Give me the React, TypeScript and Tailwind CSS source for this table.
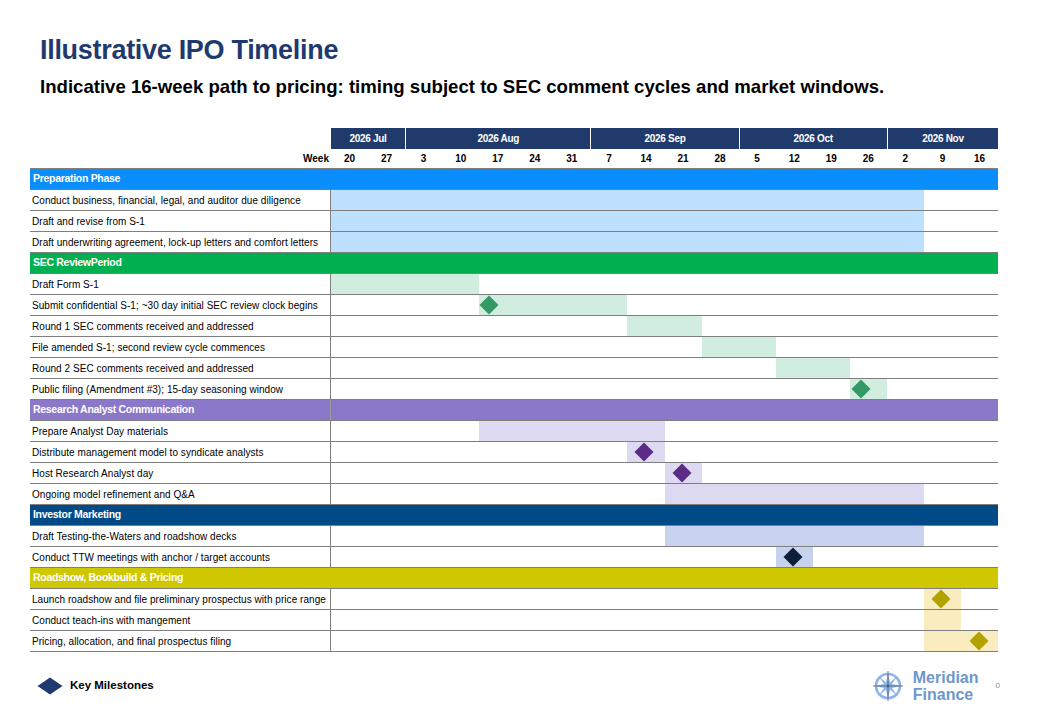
import React from "react";

const weeks = [20, 27, 3, 10, 17, 24, 31, 7, 14, 21, 28, 5, 12, 19, 26, 2, 9, 16];

const months = [
  { label: "2026 Jul", span: "col-span-2" },
  { label: "2026 Aug", span: "col-span-5" },
  { label: "2026 Sep", span: "col-span-4" },
  { label: "2026 Oct", span: "col-span-4" },
  { label: "2026 Nov", span: "col-span-3" },
];

type Task = { label: string; bar: string; diamond?: number };
type Section = {
  title: string;
  header: string;
  divider?: boolean;
  barColor: string;
  diamondColor: string;
  tasks: Task[];
};

const sections: Section[] = [
  {
    title: "Preparation Phase",
    header: "bg-[#0a8dfd]",
    barColor: "bg-[#bde0fe]",
    diamondColor: "#0a8dfd",
    tasks: [
      { label: "Conduct business, financial, legal, and auditor due diligence", bar: "col-start-1 col-span-16" },
      { label: "Draft and revise from S-1", bar: "col-start-1 col-span-16" },
      { label: "Draft underwriting agreement, lock-up letters and comfort letters", bar: "col-start-1 col-span-16" },
    ],
  },
  {
    title: "SEC ReviewPeriod",
    header: "bg-[#00b050]",
    barColor: "bg-[#d1eddf]",
    diamondColor: "#339966",
    tasks: [
      { label: "Draft Form S-1", bar: "col-start-1 col-span-4" },
      { label: "Submit confidential S-1; ~30 day initial SEC review clock begins", bar: "col-start-5 col-span-4", diamond: 159 },
      { label: "Round 1 SEC comments received and addressed", bar: "col-start-9 col-span-2" },
      { label: "File amended S-1; second review cycle commences", bar: "col-start-11 col-span-2" },
      { label: "Round 2 SEC comments received and addressed", bar: "col-start-13 col-span-2" },
      { label: "Public filing (Amendment #3); 15-day seasoning window", bar: "col-start-15 col-span-1", diamond: 531 },
    ],
  },
  {
    title: "Research Analyst Communication",
    header: "bg-[#8b78c8]",
    divider: true,
    barColor: "bg-[#ddd9f0]",
    diamondColor: "#5b2a86",
    tasks: [
      { label: "Prepare Analyst Day materials", bar: "col-start-5 col-span-5" },
      { label: "Distribute management model to syndicate analysts", bar: "col-start-9 col-span-1", diamond: 314 },
      { label: "Host Research Analyst day", bar: "col-start-10 col-span-1", diamond: 352 },
      { label: "Ongoing model refinement and Q&A", bar: "col-start-10 col-span-7" },
    ],
  },
  {
    title: "Investor Marketing",
    header: "bg-[#004b87]",
    barColor: "bg-[#c7d3ee]",
    diamondColor: "#0c1f3a",
    tasks: [
      { label: "Draft Testing-the-Waters and roadshow decks", bar: "col-start-10 col-span-7" },
      { label: "Conduct TTW meetings with anchor / target accounts", bar: "col-start-13 col-span-1", diamond: 463 },
    ],
  },
  {
    title: "Roadshow, Bookbuild & Pricing",
    header: "bg-[#cfc700]",
    barColor: "bg-[#f9ecbf]",
    diamondColor: "#b3a100",
    tasks: [
      { label: "Launch roadshow and file preliminary prospectus with price range", bar: "col-start-17 col-span-1", diamond: 611 },
      { label: "Conduct teach-ins with mangement", bar: "col-start-17 col-span-1" },
      { label: "Pricing, allocation, and final prospectus filing", bar: "col-start-17 col-span-2", diamond: 649 },
    ],
  },
];

function Diamond({ color, left }: { color: string; left: number }) {
  return (
    <svg
      className="absolute top-[0px]"
      style={{ left: left - 10 }}
      width="20"
      height="20"
      viewBox="0 0 20 20"
    >
      <polygon points="10,0.5 19.5,10 10,19.5 0.5,10" fill={color} />
    </svg>
  );
}

function Compass() {
  return (
    <svg width="32" height="32" viewBox="0 0 32 32">
      <circle cx="16" cy="16" r="12" fill="none" stroke="#8db4ea" strokeWidth="2.6" />
      <g fill="#8db4ea">
        <polygon points="16,2 18.2,13.8 16,16 13.8,13.8" />
        <polygon points="16,30 18.2,18.2 16,16 13.8,18.2" />
        <polygon points="2,16 13.8,13.8 16,16 13.8,18.2" />
        <polygon points="30,16 18.2,13.8 16,16 18.2,18.2" />
        <polygon points="6.1,6.1 15,13 16,16 13,15" />
        <polygon points="25.9,6.1 19,15 16,16 17,13" />
        <polygon points="6.1,25.9 13,17 16,16 15,19" />
        <polygon points="25.9,25.9 17,19 16,16 19,17" />
      </g>
      <g stroke="#4d5a6b" strokeWidth="0.8">
        <line x1="16" y1="1" x2="16" y2="31" />
        <line x1="1" y1="16" x2="31" y2="16" />
      </g>
      <circle cx="16" cy="16" r="1.4" fill="#4d5a6b" />
    </svg>
  );
}

export default function App() {
  return (
    <div
      className="w-[1040px] h-[720px] bg-white text-black overflow-hidden"
      style={{ fontFamily: '"Liberation Sans", Arial, sans-serif' }}
    >
      <div className="pl-[40px] pt-[34px]">
        <h1 className="text-[27px] leading-[32px] font-bold text-[#1f3a6e] tracking-[-0.3px]">
          Illustrative IPO Timeline
        </h1>
        <p className="mt-[10px] text-[18.6px] leading-[22px] font-bold">
          Indicative 16-week path to pricing: timing subject to SEC comment cycles and market windows.
        </p>
      </div>

      <div className="ml-[30px] mt-[30px] w-[968px]">
        {/* month header */}
        <div className="flex">
          <div className="w-[301px] shrink-0" />
          <div className="grid flex-1 grid-cols-[repeat(18,minmax(0,1fr))] h-[21px]">
            {months.map((m, i) => (
              <div
                key={m.label}
                className={`${m.span} bg-[#1f3a6b] text-white text-[10px] font-bold flex items-center justify-center tracking-[-0.3px] ${i > 0 ? "border-l border-white" : ""}`}
              >
                {m.label}
              </div>
            ))}
          </div>
        </div>

        {/* week row */}
        <div className="flex h-[20px] border-b border-[#7f7f7f] text-[10px] font-bold">
          <div className="w-[301px] shrink-0 flex items-center justify-end pr-[2px]">Week</div>
          <div className="grid flex-1 grid-cols-[repeat(18,minmax(0,1fr))]">
            {weeks.map((w, i) => (
              <div key={i} className="flex items-center justify-center">
                {w}
              </div>
            ))}
          </div>
        </div>

        {sections.map((s) => (
          <div key={s.title}>
            <div className={`flex h-[21px] border-b border-[#7f7f7f] ${s.header}`}>
              <div
                className={`w-[301px] shrink-0 flex items-center pl-[3px] text-white text-[10.5px] font-bold tracking-[-0.3px] ${s.divider ? "border-r border-[#9a9a9a]" : ""}`}
              >
                {s.title}
              </div>
            </div>
            {s.tasks.map((t) => (
              <div key={t.label} className="flex h-[21px] border-b border-[#7f7f7f]">
                <div className="w-[301px] shrink-0 flex items-center pl-[2px] border-r border-[#7f7f7f] text-[10px] tracking-[0.05px] whitespace-nowrap">
                  {t.label}
                </div>
                <div className="relative grid flex-1 grid-cols-[repeat(18,minmax(0,1fr))]">
                  <div className={`${t.bar} ${s.barColor}`} />
                  {t.diamond !== undefined && <Diamond color={s.diamondColor} left={t.diamond - 1} />}
                </div>
              </div>
            ))}
          </div>
        ))}

        {/* footer */}
        <div className="flex items-center h-[68px]">
          <svg width="26" height="18" viewBox="0 0 26 18" className="ml-[7px]">
            <polygon points="13,0.5 25.5,9 13,17.5 0.5,9" fill="#1f3a6e" />
          </svg>
          <span className="ml-[7px] text-[11.5px] font-bold">Key Milestones</span>
          <div className="flex-1" />
          <div className="flex items-center mr-[-2px]">
            <Compass />
            <div className="ml-[9px] text-[16px] leading-[17px] font-bold text-[#6e97cc]">
              <div>Meridian</div>
              <div>Finance</div>
            </div>
            <span className="ml-[17px] text-[8px] text-[#8a8a8a]">0</span>
          </div>
        </div>
      </div>
    </div>
  );
}
